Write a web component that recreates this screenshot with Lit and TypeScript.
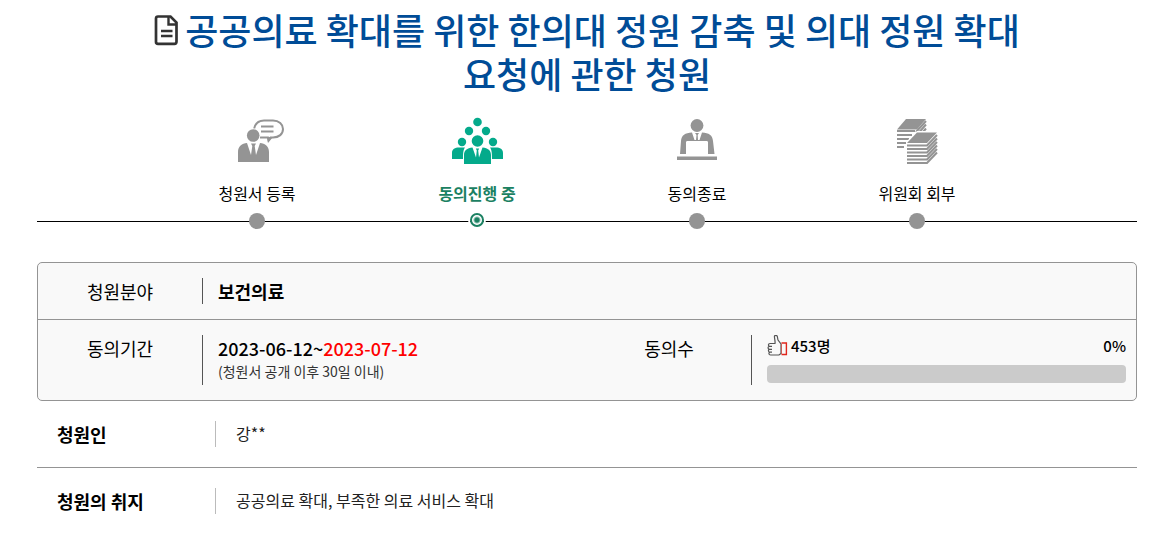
import { LitElement, html, css, svg } from "lit";
import { customElement, property } from "lit/decorators.js";
import { classMap } from "lit/directives/class-map.js";

const registerIcon = svg`
  <path d="M26 14 C27 9 30 5.500 36 5.500 H45 C51 5.500 55 9.500 55 14 C55 19 51 22.500 45 22.500 H42.500 L40.500 25 L40 22.500 H32"
    fill="none" stroke="#949494" stroke-width="2"/>
  <path d="M39 22 H45 L40 28Z" fill="#949494"/>
  <path d="M33 11.500 H45.500 M33 16.500 H45.500" stroke="#949494" stroke-width="2"/>
  <circle cx="25" cy="20.500" r="7.300" fill="#fff"/>
  <circle cx="25.200" cy="20.500" r="6.300" fill="#949494"/>
  <path d="M10 47 V37 C10 31 14 28.500 19 28 L23 40 L24.300 31 L23 28.500 H28 L26.700 31 L28 40 L32 28 C37 28.500 41 31 41 37 V47Z" fill="#949494"/>
`;

const agreeIcon = svg`
  <g fill="#04aa8b">
    <circle cx="29.500" cy="7" r="4.300"/>
    <circle cx="21" cy="16" r="4.200"/><circle cx="38" cy="16" r="4.200"/>
    <circle cx="14" cy="27" r="4.200"/><circle cx="45" cy="27" r="4.200"/>
    <path d="M4 44 V38 C4 34 7 32.500 11 32.500 H17 C15.500 34.500 15 37 15 44Z"/>
    <path d="M55 44 V38 C55 34 52 32.500 48 32.500 H42 C43.500 34.500 44 37 44 44Z"/>
    <circle cx="29.500" cy="26" r="5.800"/>
    <path d="M16 49 V40 C16 35.500 19 33 24.500 32.500 L28 42.500 L28.800 35.500 L27.800 33.500 H31.200 L30.200 35.500 L31 42.500 L34.500 32.500 C40 33 43 35.500 43 40 V49Z"/>
  </g>
`;

const closedIcon = svg`
  <g fill="#949494">
    <circle cx="29" cy="10.500" r="6.400"/>
    <path d="M12 39 L13 26 C13.500 20 17 18 24 17.500 L26.500 25 H28 L28.500 20 L27 18 H31 L29.700 20 L30 25 H31.500 L34 17.500 C41 18 44.500 20 45 26 L46.500 39 H40 V27.500 C40 26.500 39.500 26 38.500 26 H19.500 C18.500 26 18 26.500 18 27.500 V39Z"/>
    <path d="M9 41.500 H49 V45 H9Z"/>
  </g>
`;

const committeeIcon = svg`
  <path d="M18 4 H38 L29 14.500 H9Z" fill="#949494"/>
  <g stroke="#949494" stroke-width="2" fill="none">
    <path d="M9 16 H27 M9 20 H24 M9 24 H21 M9 28 H18 M9 32 H16"/>
    <path d="M28 17 L38 6 M31 17.500 L38 9.500 M35 17 L38 13.500"/>
  </g>
  <path d="M29 16 H50 V46 H18 V27Z" fill="#fff"/>
  <path d="M29 17.500 H49 L39 28 H19Z" fill="#949494"/>
  <g stroke="#949494" stroke-width="2" fill="none">
    <path d="M19 30.500 H39 L49 20 M19 34 H39 L49 23.500 M19 37.500 H39 L49 27 M19 41 H39 L49 30.500 M19 44.500 H39 L49 34 M19 48 H39 L49 37.500"/>
  </g>
`;

const steps = [
  { label: "청원서 등록", icon: registerIcon, current: false },
  { label: "동의진행 중", icon: agreeIcon, current: true },
  { label: "동의종료", icon: closedIcon, current: false },
  { label: "위원회 회부", icon: committeeIcon, current: false },
];

@customElement("petition-steps")
class PetitionSteps extends LitElement {
  static styles = css`
    :host { display: block; }
    .steps {
      display: flex;
      justify-content: center;
      margin: 0;
      padding: 0;
      list-style: none;
      background: linear-gradient(#000, #000) 0 106px / 100% 1px no-repeat;
    }
    .step {
      display: flex;
      flex-direction: column;
      align-items: center;
      width: 20%;
      font-size: 16px;
      line-height: 24px;
    }
    .icon { display: block; width: 58px; height: 52px; margin-bottom: 14px; }
    .dot {
      box-sizing: border-box;
      width: 16px;
      height: 16px;
      margin-top: 8px;
      border-radius: 50%;
      background: #949494;
    }
    .current { color: #1b8162; font-weight: 700; }
    .current .dot {
      width: 14px;
      height: 14px;
      border: 2px solid #1b8162;
      background: radial-gradient(circle, #1b8162 0 2px, #fff 4px);
      box-shadow: 0 0 0 2px #fff;
    }
  `;
  render() {
    return html`<ol class="steps">
      ${steps.map((s) => html`
        <li class=${classMap({ step: true, current: s.current })} aria-current=${s.current ? "step" : "false"}>
          <svg class="icon" viewBox="0 0 58 52" aria-hidden="true">${s.icon}</svg>
          <span>${s.label}</span>
          <span class="dot"></span>
        </li>`)}
    </ol>`;
  }
}

@customElement("petition-summary")
class PetitionSummary extends LitElement {
  @property({ type: Number }) count = 453;
  @property({ type: Number }) percent = 0;

  static styles = css`
    :host { display: block; }
    .box {
      margin: 0;
      border: 1px solid #949494;
      border-radius: 5px;
      background: #f9f9f9;
    }
    .row { display: flex; padding: 15px 0; }
    .row + .row { border-top: 1px solid #949494; }
    .cell { display: flex; flex: 1; }
    .label {
      box-sizing: border-box;
      width: 165px;
      border-right: 1px solid #555;
      text-align: center;
      font-size: 18px;
      line-height: 26px;
    }
    .value {
      flex: 1;
      margin: 0;
      padding: 0 10px 0 15px;
      font-size: 18px;
      line-height: 26px;
      font-weight: 500;
    }
    .strong { font-weight: 700; }
    .end { color: #f00; }
    .note { font-size: 14px; line-height: 20px; font-weight: 400; color: #333; padding-bottom: 4px; }
    .tally { display: flex; align-items: center; gap: 3px; font-size: 15px; line-height: 22px; height: 22px; }
    .thumb { width: 21px; height: 22px; }
    .percent { margin-left: auto; }
    .bar {
      display: block;
      width: 100%;
      height: 18px;
      margin-top: 8px;
      border: 0;
      border-radius: 4px;
      overflow: hidden;
      appearance: none;
      background: #cbcbcb;
    }
    .bar::-webkit-progress-bar { background: #cbcbcb; }
    .bar::-webkit-progress-value { background: #1b8162; }
  `;
  render() {
    return html`<dl class="box">
      <div class="row">
        <div class="cell">
          <dt class="label">청원분야</dt>
          <dd class="value strong">보건의료</dd>
        </div>
      </div>
      <div class="row">
        <div class="cell">
          <dt class="label">동의기간</dt>
          <dd class="value">
            2023-06-12~<span class="end">2023-07-12</span>
            <div class="note">(청원서 공개 이후 30일 이내)</div>
          </dd>
        </div>
        <div class="cell">
          <dt class="label">동의수</dt>
          <dd class="value">
            <div class="tally">
              <svg class="thumb" viewBox="0 0 21 22" fill="none" aria-hidden="true">
                <path d="M3 8.500 H8 C8.500 6 7 2 7.500 1 C8.500 -0.200 10 0.300 10.300 1.500 L11 5 L14 9 V18.500 L12 20 H3.500 C1.500 20 1.500 17.500 3 17.200 C1 17 1 14.500 2.500 14.300 C0.500 14 0.500 11.700 2.500 11.400 C1 11 1 8.700 3 8.500 M2.500 11.400 H5 M2.500 14.300 H5 M3 17.200 H5" stroke="#555" stroke-width="1.200"/>
                <path d="M14.500 8 H19.400 V19.500 H14.500" stroke="#e0261c" stroke-width="1.400"/>
                <path d="M14.500 9 V19" stroke="#c4605a" stroke-width="1"/>
              </svg>
              <span>${this.count}명</span>
              <span class="percent">${this.percent}%</span>
            </div>
            <progress class="bar" aria-label="동의율" max="100" value=${this.percent}></progress>
          </dd>
        </div>
      </div>
    </dl>`;
  }
}

@customElement("app-root")
class AppRoot extends LitElement {
  static styles = css`
    :host {
      display: block;
      padding: 7px 21px 0 37px;
      font-family: "Noto Sans CJK KR", "Noto Sans", sans-serif;
      color: #000;
      background: #fff;
    }
    .title {
      margin: 0 auto;
      max-width: 900px;
      text-align: center;
      color: #004c97;
      font-size: 36px;
      line-height: 44px;
      font-weight: 500;
      word-break: keep-all;
    }
    .doc { width: 25px; height: 32px; margin-right: 6px; vertical-align: -1px; }
    .progress { margin-top: 20px; }
    .summary { margin-top: 33px; }
    .details { margin: 0; }
    .detail { display: flex; padding: 20px 0; }
    .detail + .detail { border-top: 1px solid #949494; }
    .term {
      box-sizing: border-box;
      width: 179px;
      padding-left: 20px;
      border-right: 1px solid #bbb;
      font-size: 18px;
      line-height: 26px;
      font-weight: 700;
    }
    .text {
      flex: 1;
      margin: 0;
      padding-left: 20px;
      font-size: 16px;
      line-height: 24px;
      color: #222;
    }
  `;
  render() {
    return html`
      <h1 class="title"><svg class="doc" viewBox="0 0 25 32" fill="none" stroke="#333" aria-hidden="true">
          <path d="M4 2.500 H16.500 L22.500 8.500 V27.500 C22.500 29 21.500 29.800 20.500 29.800 H4 C2.800 29.800 2 29 2 28 V4.500 C2 3.300 2.800 2.500 4 2.500Z" stroke-width="2.700"/>
          <path d="M14.500 3 V10.500 H22" stroke-width="2.400"/>
          <path d="M7 17 H18.500 M7 22 H18.500" stroke-width="2.700"/>
        </svg>공공의료 확대를 위한 한의대 정원 감축 및 의대 정원 확대 요청에 관한 청원</h1>
      <petition-steps class="progress"></petition-steps>
      <petition-summary class="summary"></petition-summary>
      <dl class="details">
        <div class="detail"><dt class="term">청원인</dt><dd class="text">강**</dd></div>
        <div class="detail"><dt class="term">청원의 취지</dt><dd class="text">공공의료 확대, 부족한 의료 서비스 확대</dd></div>
      </dl>`;
  }
}
